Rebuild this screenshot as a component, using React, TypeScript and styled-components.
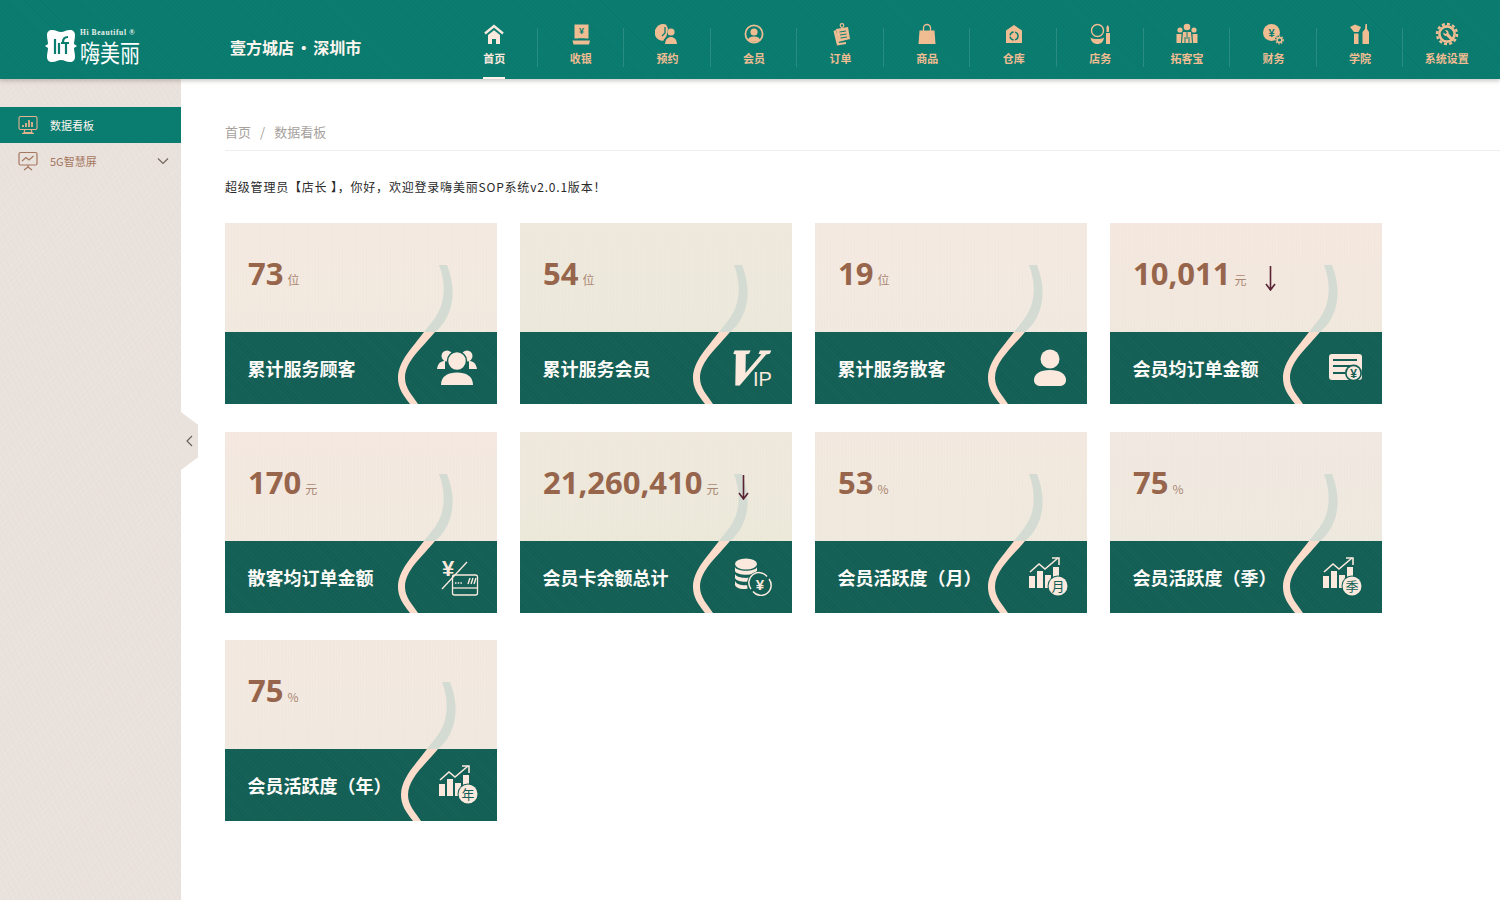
import React from 'react';
import styled, { createGlobalStyle } from 'styled-components';

const NAV_ACCENT = '#f0bd93';
const ICON_CREAM = '#fbe9dd';
const BAR_GREEN = '#135f55';

const GlobalStyle = createGlobalStyle`
  html, body {
    margin: 0;
    padding: 0;
    background: #ffffff;
    font-family: "Noto Sans CJK SC", "Noto Sans", sans-serif;
  }
  * {
    box-sizing: border-box;
  }
`;

const Page = styled.div`
  width: 1500px;
  height: 900px;
  display: flex;
  flex-direction: column;
  overflow: hidden;
`;

const Header = styled.header`
  height: 79px;
  flex: none;
  display: flex;
  background-color: #0b7c70;
  background-image: repeating-linear-gradient(45deg, rgba(0, 0, 0, 0.03) 0 1px, transparent 1px 3px);
  box-shadow: 0 2px 4px rgba(90, 80, 70, 0.3);
  position: relative;
  z-index: 2;
`;

const LogoBox = styled.div`
  width: 230px;
  flex: none;
  padding: 29px 0 0 45px;
  display: flex;
  gap: 3px;
`;

const LogoText = styled.div`
  color: #ffffff;
  display: flex;
  flex-direction: column;
`;

const LogoLatin = styled.span`
  font-family: "Liberation Serif", serif;
  font-size: 7.5px;
  line-height: 8px;
  letter-spacing: 0.6px;
  font-weight: 700;
  color: #e6f2ee;
`;

const LogoCn = styled.span`
  font-size: 20px;
  line-height: 26px;
  font-weight: 400;
  transform: scaleY(1.18);
  transform-origin: top;
`;

const StoreTitle = styled.div`
  width: 221px;
  flex: none;
  padding-top: 36px;
  color: #fdf6ef;
  font-size: 16px;
  line-height: 22px;
  font-weight: 700;
  white-space: nowrap;
  word-spacing: -2px;
`;

const Nav = styled.nav`
  flex: none;
  width: 1039px;
  display: flex;
`;

const NavItem = styled.div<{ $active?: boolean; $last?: boolean }>`
  flex: 1;
  position: relative;
  padding-top: 22px;
  display: flex;
  flex-direction: column;
  align-items: center;
  color: ${(p) => (p.$active ? ICON_CREAM : NAV_ACCENT)};

  &::after {
    content: '';
    display: ${(p) => (p.$last ? 'none' : 'block')};
    position: absolute;
    right: 0;
    top: 28px;
    height: 39px;
    width: 1px;
    background: rgba(255, 255, 255, 0.13);
  }
`;

const NavLabel = styled.span<{ $active?: boolean }>`
  margin-top: 4px;
  font-size: 11px;
  line-height: 16px;
  font-weight: 700;
  white-space: nowrap;
  position: relative;

  &::after {
    content: '';
    display: ${(p) => (p.$active ? 'block' : 'none')};
    position: absolute;
    left: 0;
    right: 0;
    top: 27px;
    height: 2px;
    background: #fdf3ec;
  }
`;

const Body = styled.div`
  flex: 1;
  display: flex;
  position: relative;
  min-height: 0;
`;

const Sidebar = styled.aside`
  width: 181px;
  flex: none;
  padding-top: 28px;
  background-color: #e9e1dc;
  background-image:
    repeating-linear-gradient(135deg, rgba(255, 255, 255, 0.07) 0 1px, transparent 1px 4px),
    repeating-linear-gradient(62deg, rgba(150, 125, 105, 0.025) 0 1px, transparent 1px 5px);
`;

const SideItem = styled.div<{ $active?: boolean }>`
  height: 36px;
  display: flex;
  align-items: center;
  padding-left: 18px;
  gap: 12px;
  font-size: 11px;
  background: ${(p) => (p.$active ? '#0b7c70' : 'transparent')};
  color: ${(p) => (p.$active ? '#fdf6ef' : '#a5775f')};
`;

const SideLabel = styled.span`
  flex: 1;
`;

const SideChevron = styled.span`
  display: flex;
  width: 12px;
  margin-right: 12px;
  color: #75655c;
`;

const CollapseHandle = styled.div`
  position: absolute;
  left: 181px;
  top: 333px;
  width: 17px;
  height: 58px;
  background: #e9e1dc;
  clip-path: polygon(0 0, 100% 22%, 100% 78%, 0 100%);
  display: flex;
  align-items: center;
  justify-content: center;
  color: #66625c;
`;

const Main = styled.main`
  flex: 1;
  min-width: 0;
  padding: 40px 0 0 44px;
`;

const Breadcrumb = styled.div`
  height: 32px;
  display: flex;
  gap: 9px;
  font-size: 13px;
  line-height: 26px;
  color: #a6a19d;
  border-bottom: 1px solid #f0eeec;
`;

const Welcome = styled.p`
  margin: 26px 0 0;
  font-size: 12px;
  line-height: 20px;
  letter-spacing: 0.8px;
  color: #2a2a2a;
  white-space: pre;
`;

const CardGrid = styled.div`
  margin-top: 26px;
  display: grid;
  grid-template-columns: repeat(4, 272px);
  grid-auto-rows: 181px;
  column-gap: 23px;
  row-gap: 27.5px;
`;

const Card = styled.article`
  position: relative;
  display: flex;
  flex-direction: column;
  overflow: hidden;
`;

const CardTop = styled.div<{ $tint: string }>`
  height: 109px;
  flex: none;
  padding: 29px 0 0 23px;
  background-color: ${(p) => p.$tint};
  background-image:
    linear-gradient(180deg, rgba(250, 232, 226, 0.25), rgba(236, 234, 218, 0.2)),
    repeating-linear-gradient(90deg, rgba(120, 110, 90, 0.018) 0 1px, transparent 1px 3px);
`;

const Amount = styled.div`
  display: flex;
  align-items: baseline;
  height: 42px;
  gap: 4px;
  position: relative;
  z-index: 1;
`;

const Value = styled.span`
  font-family: "Open Sans", sans-serif;
  font-size: 31px;
  line-height: 42px;
  font-weight: 700;
  color: #96654c;
`;

const Unit = styled.span`
  font-size: 12px;
  color: #a98672;
`;

const DownArrow = styled.span`
  display: flex;
  flex: none;
  margin: 0 0 3px 15px;
  align-self: flex-end;
  color: #5a2233;
`;

const CardBar = styled.div`
  flex: 1;
  display: flex;
  align-items: center;
  justify-content: space-between;
  padding: 0 19px 0 22.5px;
  background-color: ${BAR_GREEN};
  background-image: repeating-linear-gradient(45deg, rgba(255, 255, 255, 0.018) 0 1px, transparent 1px 3px);
`;

const CardLabel = styled.h3`
  margin: 0;
  font-size: 18px;
  line-height: 24px;
  font-weight: 700;
  color: #fdfbf8;
  white-space: nowrap;
`;

const CardIcon = styled.div<{ $nudge: number }>`
  width: 40px;
  height: 40px;
  flex: none;
  margin-right: ${(p) => -p.$nudge}px;
  display: flex;
  align-items: center;
  justify-content: center;
  color: ${ICON_CREAM};
  position: relative;
  z-index: 1;
`;

const CurveSvg = styled.svg<{ $shift: number }>`
  position: absolute;
  left: ${(p) => p.$shift}px;
  top: 0;
  pointer-events: none;
`;

const Curve = ({ shift = 0 }: { shift?: number }) => (
  <CurveSvg $shift={shift} width="272" height="181" viewBox="0 0 272 181">
    <path
      d="M214 42 L222 42 C229 60 230 78 222 94 C219 100 215 105 210 109 L199 109 C206 100 214 92 217 80 C220 68 219 55 214 42 Z"
      fill="#d3dbd2"
    />
    <path
      d="M199 109 L210 109 C198 124 180 138 180 155 C180 165 187 172 193 181 L185 181 C178 172 173 165 173 155 C173 138 188 124 199 109 Z"
      fill="#fcdccb"
    />
  </CurveSvg>
);

const Yen = ({ x, y, size, fill }: { x: number; y: number; size: number; fill: string }) => (
  <text x={x} y={y} fontSize={size} fontWeight={700} textAnchor="middle" fill={fill} fontFamily="Liberation Sans, sans-serif">
    ¥
  </text>
);

const HEADER_BG = '#0b7c70';

const navIcons: Record<string, React.ReactNode> = {
  home: (
    <>
      <path d="M3 11.5 L12 4 L21 11.5" fill="none" stroke="currentColor" strokeWidth="2.4" />
      <path d="M6 13 L12 8.3 L18 13 V22 H14 V17 H10 V22 H6 Z" fill="currentColor" />
    </>
  ),
  cashier: (
    <>
      <rect x="5.5" y="2.5" width="14" height="14" fill="currentColor" />
      <path d="M3.5 18.5 H21 L20 22.5 H4.5 Z" fill="currentColor" />
      <path d="M9 16.5 H16 V18 H9 Z" fill={HEADER_BG} />
      <Yen x={12.5} y={12} size={9} fill={HEADER_BG} />
    </>
  ),
  booking: (
    <>
      <path d="M11 2.5 A8.5 8.5 0 1 0 8 19 L11.5 14 L13 6.5 Z" fill="currentColor" />
      <path d="M10 5 V11 L7 14" fill="none" stroke={HEADER_BG} strokeWidth="1.3" />
      <circle cx="16" cy="10" r="3.6" fill="currentColor" />
      <path d="M10 22 C10.5 17 13 15 16 15 C19 15 21.5 17 22 22 Z" fill="currentColor" />
    </>
  ),
  member: (
    <>
      <circle cx="12" cy="12" r="8.6" fill="none" stroke="currentColor" strokeWidth="1.7" />
      <circle cx="12" cy="10" r="3.6" fill="currentColor" />
      <path d="M5.8 18 C7 15 9.5 14.5 12 14.5 C14.5 14.5 17 15 18.2 18 C16 20.4 8 20.4 5.8 18 Z" fill="currentColor" />
    </>
  ),
  order: (
    <>
      <path d="M7 7 L19 5 L21 17 L9 20 Z" fill="currentColor" />
      <path d="M4.5 9 L7 8 L10 21 L17 20 L17 22 L8 23.5 Z" fill="currentColor" />
      <circle cx="13" cy="3.5" r="1.8" fill="none" stroke="currentColor" strokeWidth="1.2" />
      <path d="M10.5 10 L17 9 M11 13 L17.5 12 M11.5 16 L18 15" stroke={HEADER_BG} strokeWidth="1" />
    </>
  ),
  goods: (
    <>
      <path d="M4.5 8.5 H19.5 L20.5 22 H3.5 Z" fill="currentColor" />
      <path d="M8.5 11 V6 A3.5 3.5 0 0 1 15.5 6 V11" fill="none" stroke="currentColor" strokeWidth="1.3" />
    </>
  ),
  warehouse: (
    <>
      <path d="M12 3 L20 8.5 V21 H4 V8.5 Z" fill="currentColor" />
      <circle cx="12" cy="14" r="4" fill="none" stroke={HEADER_BG} strokeWidth="1.5" strokeDasharray="5 1.5" />
    </>
  ),
  shop: (
    <>
      <circle cx="9.5" cy="8.5" r="6" fill="none" stroke="currentColor" strokeWidth="1.4" />
      <path d="M2.5 15.5 C5 17.5 13 17.5 16 15.5 C15.5 20 13 22 9.5 22 C6 22 3 20 2.5 15.5 Z" fill="currentColor" />
      <path d="M19.5 3 L21 5 V10 H18.5 V5 Z" fill="currentColor" />
      <rect x="18" y="11" width="4" height="11" fill="currentColor" />
    </>
  ),
  customer: (
    <>
      <circle cx="12" cy="5" r="3.3" fill="currentColor" />
      <circle cx="5" cy="8" r="2.6" fill="currentColor" />
      <circle cx="19" cy="8" r="2.6" fill="currentColor" />
      <path d="M8 10 H16 L17 21 H7 Z" fill="currentColor" />
      <path d="M1.5 12 H6.5 L6 21 H1.5 Z M17.5 12 H22.5 V21 H18 Z" fill="currentColor" />
      <path d="M12 10 V17 M10 15 V21 M14 15 V21" stroke={HEADER_BG} strokeWidth="1" />
    </>
  ),
  finance: (
    <>
      <circle cx="10.5" cy="10.5" r="8.5" fill="currentColor" />
      <Yen x={10.5} y={14.5} size={11} fill={HEADER_BG} />
      <circle cx="18.5" cy="18" r="4.6" fill={HEADER_BG} />
      <circle cx="18.5" cy="18" r="2.4" fill="none" stroke="currentColor" strokeWidth="1.6" />
      <circle cx="18.5" cy="18" r="3.8" fill="none" stroke="currentColor" strokeWidth="1.2" strokeDasharray="1.4 1.4" />
    </>
  ),
  academy: (
    <>
      <path d="M2 5 L7 2.5 L13 5 L10.5 10 H6 Z" fill="currentColor" />
      <rect x="6" y="11.5" width="4.5" height="10.5" fill="currentColor" />
      <path d="M17.5 2 L19 2 V7 L21 10 V22 H14.5 V10 L17 7 Z" fill="currentColor" />
    </>
  ),
  settings: (
    <>
      <circle cx="12" cy="12" r="7.6" fill="none" stroke="currentColor" strokeWidth="2.6" />
      <circle cx="12" cy="12" r="10" fill="none" stroke="currentColor" strokeWidth="2.4" strokeDasharray="3 2.2" />
      <path d="M10 8 C12 7.5 14 9 13.6 11.4 L19 17.5 L17 19.5 L11.5 14 C9.5 14.4 8 12.5 8.4 10.4 L10.6 12 L12 10.8 Z" fill="currentColor" />
    </>
  ),
};

const navItems: [string, string][] = [
  ['首页', 'home'],
  ['收银', 'cashier'],
  ['预约', 'booking'],
  ['会员', 'member'],
  ['订单', 'order'],
  ['商品', 'goods'],
  ['仓库', 'warehouse'],
  ['店务', 'shop'],
  ['拓客宝', 'customer'],
  ['财务', 'finance'],
  ['学院', 'academy'],
  ['系统设置', 'settings'],
];

const TrendIcon = ({ tag }: { tag: string }) => (
  <svg width="40" height="40" viewBox="0 0 40 40">
    <path d="M1 15 L10 7 L16 12 L29 1" fill="none" stroke="currentColor" strokeWidth="1.6" />
    <path d="M23 1 H30 V8" fill="none" stroke="currentColor" strokeWidth="1.6" />
    <rect x="0" y="19" width="6" height="12" fill="currentColor" />
    <rect x="8" y="14" width="6" height="17" fill="currentColor" />
    <rect x="16" y="18" width="6" height="13" fill="currentColor" />
    <rect x="24" y="10" width="6" height="14" fill="currentColor" />
    <circle cx="29" cy="29" r="10.5" fill={BAR_GREEN} />
    <circle cx="29" cy="29" r="9.5" fill="currentColor" />
    <text x="29" y="34" fontSize="13" textAnchor="middle" fill={BAR_GREEN} fontFamily="Noto Sans CJK SC, sans-serif">
      {tag}
    </text>
  </svg>
);

const cardIcons: Record<string, React.ReactNode> = {
  users: (
    <svg width="40" height="38" viewBox="0 0 40 38">
      <circle cx="10" cy="7" r="5.5" fill="currentColor" />
      <circle cx="30" cy="7" r="5.5" fill="currentColor" />
      <path d="M0 20 C1 14 4 12 8 12 L8 20 Z M40 20 C39 14 36 12 32 12 L32 20 Z" fill="currentColor" />
      <circle cx="20" cy="12" r="9.5" fill="currentColor" stroke={BAR_GREEN} strokeWidth="1.5" />
      <path d="M4 36 C4 27 11 23.5 20 23.5 C29 23.5 36 27 36 36 Z" fill="currentColor" />
    </svg>
  ),
  vip: (
    <svg width="40" height="40" viewBox="0 0 40 40" overflow="visible">
      <text
        transform="translate(-13 36) skewX(-24)"
        fontSize="50"
        fontWeight={700}
        fill="currentColor"
        stroke="currentColor"
        strokeWidth="1.6"
        fontFamily="Liberation Serif, serif"
      >
        V
      </text>
      <text x="20" y="38" fontSize="20" fill="currentColor" fontFamily="Liberation Sans, sans-serif">
        IP
      </text>
    </svg>
  ),
  person: (
    <svg width="34" height="38" viewBox="0 0 34 38">
      <circle cx="17" cy="10" r="9.5" fill="currentColor" />
      <path d="M1 31 C1 25 7 21 17 21 C27 21 33 25 33 31 C33 35 30 37 26 37 H8 C4 37 1 35 1 31 Z" fill="currentColor" />
    </svg>
  ),
  bill: (
    <svg width="36" height="30" viewBox="0 0 36 30">
      <rect x="1" y="1" width="33" height="26" rx="3" fill="currentColor" />
      <path d="M5 7 H29 M5 13 H22 M5 20 H17" stroke={BAR_GREEN} strokeWidth="2" />
      <circle cx="25.5" cy="20" r="8.5" fill={BAR_GREEN} />
      <circle cx="25.5" cy="20" r="6.8" fill="currentColor" />
      <Yen x={25.5} y={24.5} size={12} fill={BAR_GREEN} />
    </svg>
  ),
  cash: (
    <svg width="40" height="40" viewBox="0 0 40 40">
      <text x="9" y="19" fontSize="22" fontWeight={700} textAnchor="middle" fill="currentColor" fontFamily="Liberation Sans, sans-serif">
        ¥
      </text>
      <path d="M3 32 L28 5" stroke="currentColor" strokeWidth="1.3" />
      <rect x="13.5" y="18" width="25" height="20" rx="2" fill="none" stroke="currentColor" strokeWidth="1.3" />
      <path d="M14 31 H38" stroke="currentColor" strokeWidth="1.3" />
      <path d="M16 26 H23" stroke="currentColor" strokeWidth="1.4" strokeDasharray="1.5 1.2" />
      <path d="M29 27 L31 21 M32 27 L34 21 M35 27 L37 21" stroke="currentColor" strokeWidth="1.4" />
    </svg>
  ),
  coins: (
    <svg width="38" height="38" viewBox="0 0 38 38">
      <ellipse cx="12" cy="6" rx="11" ry="5.5" fill="currentColor" />
      <path d="M1 9 C3 14 21 14 23 9 V13 C21 18 3 18 1 13 Z" fill="currentColor" />
      <path d="M1 16 C3 21 19 21 23 17 V20 C19 25 3 25 1 20 Z" fill="currentColor" />
      <path d="M1 23 C3 28 14 28 17 26 V29 C13 32 3 32 1 27 Z" fill="currentColor" />
      <circle cx="26" cy="26" r="13" fill={BAR_GREEN} />
      <path d="M17 31 A10 10 0 0 1 33 18.5 M35 21 A10 10 0 0 1 19 33.5" fill="none" stroke="currentColor" strokeWidth="1.5" />
      <Yen x={26} y={31.5} size={15} fill="currentColor" />
    </svg>
  ),
  month: <TrendIcon tag="月" />,
  season: <TrendIcon tag="季" />,
  year: <TrendIcon tag="年" />,
};

type CardData = {
  value: string;
  unit: string;
  label: string;
  icon: string;
  tint: string;
  down?: boolean;
  shift?: number;
  nudge?: number;
};

const cards: CardData[] = [
  { value: '73', unit: '位', label: '累计服务顾客', icon: 'users', tint: '#f3eae1', nudge: -1 },
  { value: '54', unit: '位', label: '累计服务会员', icon: 'vip', tint: '#ece9dc' },
  { value: '19', unit: '位', label: '累计服务散客', icon: 'person', tint: '#f3eae2', nudge: 2 },
  { value: '10,011', unit: '元', label: '会员均订单金额', icon: 'bill', tint: '#f3e8df', down: true, nudge: 3 },
  { value: '170', unit: '元', label: '散客均订单金额', icon: 'cash', tint: '#f3e9e0', nudge: 1 },
  { value: '21,260,410', unit: '元', label: '会员卡余额总计', icon: 'coins', tint: '#ece9db', down: true },
  { value: '53', unit: '%', label: '会员活跃度（月）', icon: 'month', tint: '#f1e9df', nudge: 1 },
  { value: '75', unit: '%', label: '会员活跃度（季）', icon: 'season', tint: '#efe9e1' },
  { value: '75', unit: '%', label: '会员活跃度（年）', icon: 'year', tint: '#f2e9e1', shift: 3, nudge: 1 },
];

const App: React.FC = () => {
  return (
    <Page>
      <GlobalStyle />
      <Header>
        <LogoBox>
          <svg width="32" height="34" viewBox="0 0 32 34">
            <path
              d="M7 1 C11 1 13 3 16 3 C19 3 21 1 25 1 C28 1 30 3 30 6 C30 10 29 12 29 15 L32 17 L29 19 C29 22 30 24 30 28 C30 31 28 33 25 33 C21 33 19 31 16 31 C13 31 11 33 7 33 C4 33 2 31 2 28 C2 24 3 22 3 19 L0 17 L3 15 C3 12 2 10 2 6 C2 3 4 1 7 1 Z"
              fill="#ffffff"
            />
            <path d="M10 10 V25 M14 14 V25 M18 13 C18 9 20 8 23 8 M21 13 V25 M16 14 H24" fill="none" stroke="#0b7c70" strokeWidth="2.2" />
          </svg>
          <LogoText>
            <LogoLatin>Hi Beautiful ®</LogoLatin>
            <LogoCn>嗨美丽</LogoCn>
          </LogoText>
        </LogoBox>
        <StoreTitle>壹方城店 • 深圳市</StoreTitle>
        <Nav>
          {navItems.map(([label, icon], i) => (
            <NavItem key={label} $active={i === 0} $last={i === navItems.length - 1}>
              <svg width="24" height="24" viewBox="0 0 24 24">
                {navIcons[icon]}
              </svg>
              <NavLabel $active={i === 0}>{label}</NavLabel>
            </NavItem>
          ))}
        </Nav>
      </Header>
      <Body>
        <Sidebar>
          <SideItem $active>
            <svg width="20" height="20" viewBox="0 0 20 20" fill="none" stroke="#e3b28e" strokeWidth="1.1">
              <rect x="1" y="1.5" width="18" height="13" rx="1.5" />
              <path d="M7 14.5 L6 17.5 H14 L13 14.5 M4 18.5 H16" />
              <path d="M5 12 V10 M8 12 V8 M11 12 V5 M14 12 V7" strokeWidth="1.8" />
            </svg>
            <SideLabel>数据看板</SideLabel>
          </SideItem>
          <SideItem>
            <svg width="20" height="20" viewBox="0 0 20 20" fill="none" stroke="#a5775f" strokeWidth="1.2">
              <rect x="1" y="1.5" width="18" height="12.5" rx="1.5" />
              <path d="M4 10 L8 6.5 L11 9 L15.5 5" />
              <path d="M10 14 V16 M10 16 L6 19 M10 16 L14 19" />
            </svg>
            <SideLabel>5G智慧屏</SideLabel>
            <SideChevron>
              <svg width="12" height="8" viewBox="0 0 12 8" fill="none" stroke="currentColor" strokeWidth="1.2">
                <path d="M1 1.5 L6 6.5 L11 1.5" />
              </svg>
            </SideChevron>
          </SideItem>
        </Sidebar>
        <CollapseHandle>
          <svg width="7" height="12" viewBox="0 0 7 12" fill="none" stroke="currentColor" strokeWidth="1.2">
            <path d="M6 1 L1 6 L6 11" />
          </svg>
        </CollapseHandle>
        <Main>
          <Breadcrumb>
            <span>首页</span>
            <span>/</span>
            <span>数据看板</span>
          </Breadcrumb>
          <Welcome>超级管理员【店长 】，你好，欢迎登录嗨美丽SOP系统v2.0.1版本！</Welcome>
          <CardGrid>
            {cards.map((c) => (
              <Card key={c.label}>
                <CardTop $tint={c.tint}>
                  <Amount>
                    <Value>{c.value}</Value>
                    <Unit>{c.unit}</Unit>
                    {c.down && (
                      <DownArrow>
                        <svg width="11" height="25" viewBox="0 0 11 25" fill="none" stroke="currentColor" strokeWidth="1.6">
                          <path d="M5.5 0 V24 M1 18 L5.5 24 L10 18" />
                        </svg>
                      </DownArrow>
                    )}
                  </Amount>
                </CardTop>
                <CardBar>
                  <CardLabel>{c.label}</CardLabel>
                  <CardIcon $nudge={c.nudge ?? 0}>{cardIcons[c.icon]}</CardIcon>
                </CardBar>
                <Curve shift={c.shift} />
              </Card>
            ))}
          </CardGrid>
        </Main>
      </Body>
    </Page>
  );
};

export default App;
